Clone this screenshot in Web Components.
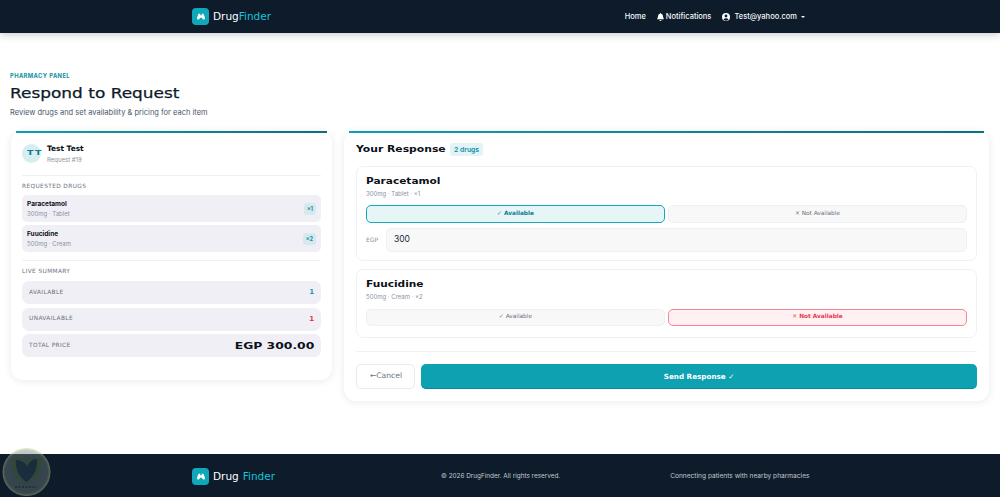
<!DOCTYPE html>
<html lang="en">
<head>
<meta charset="utf-8">
<title>DrugFinder</title>
<style>
    html, body { margin: 0; padding: 0; background: #fff; }
    body { font-family: Inter, "Liberation Sans", sans-serif; color: #0d1b2a; }
    drug-app { display: flex; flex-direction: column; height: 497px; overflow: hidden; position: relative; }
</style>
</head>
<body>
<drug-app>
    <app-nav></app-nav>
    <main-area>
        <page-header></page-header>
        <two-columns>
            <patient-panel></patient-panel>
            <response-panel>
                <drug-response name="Paracetamol" meta="300mg · Tablet · ×1" state="on" price="300"></drug-response>
                <drug-response name="Fuucidine" meta="500mg · Cream · ×2" state="off"></drug-response>
            </response-panel>
        </two-columns>
    </main-area>
    <app-footer></app-footer>
    <water-mark></water-mark>
</drug-app>

<script>
const WIDE = '"DejaVu Sans", sans-serif';

// the reference heading face is wider than anything installed, so stretch it
const stretch = (text, scale, width, origin = 'left') =>
    `<span style="display:inline-block;white-space:nowrap;width:${width}px;transform:scaleX(${scale});transform-origin:${origin}">${text}</span>`;

class BrandMark extends HTMLElement {
    constructor() {
        super();
        this.attachShadow({ mode: 'open' });
    }

    connectedCallback() {
        const gap = this.getAttribute('gap') || '0';
        this.shadowRoot.innerHTML = `
            <style>
                :host { display: inline-flex; align-items: center; gap: 4px; }
                .box {
                    width: 17px; height: 17px; border-radius: 4px; background: #0fa8bb;
                    display: flex; align-items: center; justify-content: center;
                }
                .name { display: flex; gap: ${gap}; color: #fff; font: 400 10.500px/1 ${WIDE}; white-space: nowrap; }
                .name b { font-weight: 400; color: #17c3d6; }
            </style>
            <span class="box">
                <svg width="8" height="7" viewBox="0 0 10 8" fill="#fff">
                    <path d="M2 .5h2v2h2v-2h2l2 5.200a1.700 1.700 0 0 1-3.200 1.100l-.5-1.300H3.700l-.5 1.300A1.700 1.700 0 0 1 0 5.700z"/>
                </svg>
            </span>
            <span class="name"><span>Drug</span><b>Finder</b></span>
        `;
    }
}
customElements.define('brand-mark', BrandMark);

class AppNav extends HTMLElement {
    constructor() {
        super();
        this.attachShadow({ mode: 'open' });
    }

    connectedCallback() {
        this.shadowRoot.innerHTML = `
            <style>
                :host {
                    display: flex; align-items: center; justify-content: space-between;
                    flex: none; height: 33px; padding: 0 195px 0 192px; background: #0d1b2a;
                    box-shadow: 0 2px 8px rgba(13, 27, 42, .22); position: relative;
                    font: 500 7.500px/1 Inter, sans-serif; color: #f4f6f8;
                }
                nav { display: flex; align-items: center; }
                span { display: flex; align-items: center; gap: 2px; }
                .home { margin-right: 11px; }
                .bell { margin-right: 11px; }
                .user { gap: 4px; }
                .caret { width: 0; height: 0; border: 2.500px solid transparent; border-top-color: #fff; border-bottom: 0; }
            </style>
            <brand-mark></brand-mark>
            <nav>
                <span class="home">Home</span>
                <span class="bell">
                    <svg width="7" height="8" viewBox="0 0 14 16" fill="#fff"><path d="M7 0a1 1 0 0 1 1 1v.7A5 5 0 0 1 12 6.600c0 3.400 2 4.600 2 6H0c0-1.400 2-2.600 2-6A5 5 0 0 1 6 1.700V1a1 1 0 0 1 1-1zM5 14h4a2 2 0 0 1-4 0z"/></svg>
                    Notifications
                </span>
                <span class="user">
                    <svg width="8" height="8" viewBox="0 0 16 16"><circle cx="8" cy="8" r="8" fill="#fff"/><circle cx="8" cy="6" r="2.800" fill="#0d1b2a"/><path d="M3 13a5.500 4 0 0 1 10 0 7 7 0 0 1-10 0z" fill="#0d1b2a"/></svg>
                    Test@yahoo.com
                    <i class="caret"></i>
                </span>
            </nav>
        `;
    }
}
customElements.define('app-nav', AppNav);

class MainArea extends HTMLElement {
    constructor() {
        super();
        this.attachShadow({ mode: 'open' });
    }

    connectedCallback() {
        this.shadowRoot.innerHTML = `
            <style>
                :host { display: block; flex: 1; padding: 39px 11px 0 10px; min-height: 0; }
            </style>
            <slot></slot>
        `;
    }
}
customElements.define('main-area', MainArea);

class PageHeader extends HTMLElement {
    constructor() {
        super();
        this.attachShadow({ mode: 'open' });
    }

    connectedCallback() {
        this.shadowRoot.innerHTML = `
            <style>
                :host { display: block; height: 59px; }
                .eyebrow { font: 700 5.800px/7px Inter, sans-serif; letter-spacing: .4px; color: #0e8fa3; }
                h1 { margin: 4px 0 0; font: 500 14px/20px ${WIDE}; color: #0d1b2a; -webkit-text-stroke: .25px #0d1b2a; }
                p { margin: 5px 0 0; font: 400 7.500px/10px Inter, sans-serif; color: #4a5565; }
            </style>
            <div class="eyebrow">PHARMACY PANEL</div>
            <h1>${stretch('Respond to Request', 1.21, 142)}</h1>
            <p>Review drugs and set availability &amp; pricing for each item</p>
        `;
    }
}
customElements.define('page-header', PageHeader);

class TwoColumns extends HTMLElement {
    constructor() {
        super();
        this.attachShadow({ mode: 'open' });
    }

    connectedCallback() {
        this.shadowRoot.innerHTML = `
            <style>
                :host { display: grid; grid-template-columns: 321px 645px; gap: 12px; align-items: start; margin-left: 1px; }
            </style>
            <slot></slot>
        `;
    }
}
customElements.define('two-columns', TwoColumns);

const CARD_CSS = `
    .card {
        position: relative; background: #fff; border-radius: 12px;
        box-shadow: 0 1px 8px rgba(13, 27, 42, .09);
    }
    .card::before {
        content: ""; position: absolute; left: 5px; right: 5px; top: 0; height: 2px;
        background: linear-gradient(90deg, #0e9fb0, #0d6f80);
    }
`;

class DrugRow extends HTMLElement {
    constructor() {
        super();
        this.attachShadow({ mode: 'open' });
    }

    connectedCallback() {
        this.shadowRoot.innerHTML = `
            <style>
                :host {
                    display: flex; align-items: center; justify-content: space-between;
                    height: 27px; padding: 0 5px; background: #f0eff5; border-radius: 5px;
                }
                b { display: block; font: 700 6.500px/9px Inter, sans-serif; color: #0a0f18; }
                small { display: block; margin-top: 1px; font: 400 6px/8px Inter, sans-serif; color: #8a93a0; }
                i { font: 700 5.500px/12px Inter, sans-serif; color: #0e8fa3; background: #d6e9ed; border-radius: 3px; padding: 0 3px; height: 12px; }
            </style>
            <div><b>${this.getAttribute('name')}</b><small>${this.getAttribute('meta')}</small></div>
            <i>${this.getAttribute('qty')}</i>
        `;
    }
}
customElements.define('drug-row', DrugRow);

class SummaryRow extends HTMLElement {
    constructor() {
        super();
        this.attachShadow({ mode: 'open' });
    }

    connectedCallback() {
        const color = this.getAttribute('color');
        const big = this.hasAttribute('big');
        const value = this.getAttribute('value');
        this.shadowRoot.innerHTML = `
            <style>
                :host {
                    display: flex; align-items: center; justify-content: space-between;
                    height: 23px; padding: 0 7px; background: #f0eff5; border-radius: 7px;
                }
                .label { font: 400 5.800px/1 ${WIDE}; letter-spacing: .4px; color: #6b7280; }
                b { font: 700 ${big ? '9.500px' : '7px'}/1 ${WIDE}; color: ${color}; }
            </style>
            <span class="label">${this.getAttribute('label')}</span>
            <b>${big ? stretch(value, 1.3, 61, 'right') : value}</b>
        `;
    }
}
customElements.define('summary-row', SummaryRow);

class PatientPanel extends HTMLElement {
    constructor() {
        super();
        this.attachShadow({ mode: 'open' });
    }

    connectedCallback() {
        this.shadowRoot.innerHTML = `
            <style>
                :host { display: block; }
                ${CARD_CSS}
                .card { height: 249px; box-sizing: border-box; padding: 13px 11px 0; }
                .who { display: flex; gap: 6px; height: 31px; border-bottom: 1px solid #eff0f3; }
                .avatar {
                    width: 19px; height: 19px; border-radius: 50%; background: #d6eef1; text-align: center;
                    font: 700 7px/19px ${WIDE}; color: #0e7c8c; letter-spacing: 1px;
                }
                .who b { display: block; font: 700 7.400px/10px ${WIDE}; color: #0a0f18; }
                .who small { display: block; margin-top: 2px; font: 400 6px/8px Inter, sans-serif; color: #8a93a0; }
                h4 { margin: 0; font: 400 5.800px/7px ${WIDE}; letter-spacing: .4px; color: #6b7280; }
                .req { margin-top: 7px; display: grid; gap: 3px; }
                .req h4 { margin-bottom: 2px; }
                .live { margin-top: 8px; border-top: 1px solid #eff0f3; padding-top: 7px; display: grid; gap: 3.500px; }
                .live h4 { margin-bottom: 2.500px; }
            </style>
            <div class="card">
                <div class="who">
                    <div class="avatar">${stretch('TT', 1.35, 10)}</div>
                    <div><b>Test Test</b><small>Request #19</small></div>
                </div>
                <div class="req">
                    <h4>REQUESTED DRUGS</h4>
                    <drug-row name="Paracetamol" meta="300mg · Tablet" qty="×1"></drug-row>
                    <drug-row name="Fuucidine" meta="500mg · Cream" qty="×2"></drug-row>
                </div>
                <div class="live">
                    <h4>LIVE SUMMARY</h4>
                    <summary-row label="AVAILABLE" value="1" color="#0e9fb0"></summary-row>
                    <summary-row label="UNAVAILABLE" value="1" color="#e8384f"></summary-row>
                    <summary-row label="TOTAL PRICE" value="EGP 300.00" color="#0a0f18" big></summary-row>
                </div>
            </div>
        `;
    }
}
customElements.define('patient-panel', PatientPanel);

class DrugResponse extends HTMLElement {
    constructor() {
        super();
        this.attachShadow({ mode: 'open' });
    }

    connectedCallback() {
        const state = this.getAttribute('state');
        const price = this.getAttribute('price');
        const name = this.getAttribute('name');
        this.shadowRoot.innerHTML = `
            <style>
                :host {
                    display: block; box-sizing: border-box; padding: 10px 9px 11px;
                    border: 1px solid #f0f1f3; border-radius: 7px; background: #fff;
                }
                h3 { margin: 0; font: 700 8px/10px ${WIDE}; color: #0a0f18; }
                small { display: block; margin-top: 3px; font: 400 6px/8px Inter, sans-serif; color: #8a93a0; }
                .pick { margin-top: 7.500px; display: grid; grid-template-columns: 1fr 1fr; gap: 3px; }
                button {
                    height: 17.500px; padding: 0; border: 1px solid #eef0f2; border-radius: 5px;
                    background: #f8f8f9; color: #6b7280; font: 400 5.800px/1 ${WIDE};
                }
                button.on { background: #e6f6f7; border-color: #12a9ba; color: #0e7c8c; font-weight: 700; }
                button.off { background: #fff1f2; border-color: #f58494; color: #e8384f; font-weight: 700; }
                .price { margin: 5.500px 0 -2.500px; display: flex; align-items: center; gap: 4px; }
                .price span { width: 16px; font: 400 6px/1 ${WIDE}; color: #8a93a0; }
                .price div {
                    flex: 1; height: 23.500px; box-sizing: border-box; padding-left: 7px; border: 1px solid #eef0f2;
                    border-radius: 5px; background: #f8f8f9; font: 400 8.500px/21px Inter, sans-serif; color: #1f2937;
                }
            </style>
            <h3>${stretch(name, 1.32, 56)}</h3>
            <small>${this.getAttribute('meta')}</small>
            <div class="pick">
                <button class="${state === 'on' ? 'on' : ''}">✓ Available</button>
                <button class="${state === 'off' ? 'off' : ''}">✕ Not Available</button>
            </div>
            ${price ? `<div class="price"><span>EGP</span><div>${price}</div></div>` : ''}
        `;
    }
}
customElements.define('drug-response', DrugResponse);

class ResponsePanel extends HTMLElement {
    constructor() {
        super();
        this.attachShadow({ mode: 'open' });
    }

    connectedCallback() {
        this.shadowRoot.innerHTML = `
            <style>
                :host { display: block; }
                ${CARD_CSS}
                .card { height: 270px; box-sizing: border-box; padding: 12px 12px 0; }
                .head { display: flex; align-items: center; gap: 4px; height: 13px; margin-bottom: 9.500px; }
                h2 { margin: 0; font: 700 8px/1 ${WIDE}; color: #0a0f18; }
                .chip { padding: 0 4px; height: 13px; border-radius: 3px; background: #e3f4f6; color: #0e8fa3; font: 600 6.800px/13px Inter, sans-serif; white-space: nowrap; }
                .list { display: grid; gap: 8px; }
                .foot { margin-top: 13px; padding-top: 11.500px; border-top: 1px solid #f0f1f3; display: flex; gap: 6px; }
                .cancel {
                    width: 59px; height: 25.500px; padding: 0 0 0 1px; border: 1px solid #e8eaed; border-radius: 5px;
                    background: #fff; color: #6b7280; font: 500 7.600px/1 ${WIDE};
                }
                .send {
                    flex: 1; height: 25.500px; padding: 1px 0 0; border: 0; border-bottom: 1px solid #0b8796; border-radius: 5px;
                    background: #0da1b2; color: #fff; font: 700 7.200px/1 ${WIDE};
                }
            </style>
            <div class="card">
                <div class="head"><h2>${stretch('Your Response', 1.35, 66)}</h2><span class="chip" style="margin-left:24px;">2 drugs</span></div>
                <div class="list"><slot></slot></div>
                <div class="foot">
                    <button class="cancel">←Cancel</button>
                    <button class="send">Send Response ✓</button>
                </div>
            </div>
        `;
    }
}
customElements.define('response-panel', ResponsePanel);

class AppFooter extends HTMLElement {
    constructor() {
        super();
        this.attachShadow({ mode: 'open' });
    }

    connectedCallback() {
        this.shadowRoot.innerHTML = `
            <style>
                :host {
                    display: flex; align-items: center; flex: none; height: 43px; box-sizing: border-box;
                    padding: 2px 0 0 192px; background: #0d1b2a; white-space: nowrap;
                    font: 400 6.400px/1 Inter, sans-serif; color: #c2c9d0;
                }
                .copy { margin-left: 166px; }
                .tag { margin-left: 110px; font-size: 6.600px; }
            </style>
            <brand-mark gap="4px"></brand-mark>
            <span class="copy">© 2026 DrugFinder. All rights reserved.</span>
            <span class="tag">Connecting patients with nearby pharmacies</span>
        `;
    }
}
customElements.define('app-footer', AppFooter);

class WaterMark extends HTMLElement {
    constructor() {
        super();
        this.attachShadow({ mode: 'open' });
    }

    connectedCallback() {
        this.shadowRoot.innerHTML = `
            <style>
                :host { position: absolute; left: 1px; top: 447px; width: 50px; height: 50px; pointer-events: none; }
            </style>
            <svg width="50" height="50" viewBox="0 0 50 50">
                <defs>
                    <radialGradient id="disc">
                        <stop offset="0" stop-color="#6d7880" stop-opacity=".4"/>
                        <stop offset=".88" stop-color="#727f80" stop-opacity=".42"/>
                        <stop offset="1" stop-color="#c9d68f" stop-opacity=".45"/>
                    </radialGradient>
                </defs>
                <circle cx="25.500" cy="25" r="24" fill="url(#disc)"/>
                <path d="M10 12c6-3 11-2 15.500 1C30 10 35 9 41 12c1 12-5 21-15.500 25C15 33 9 24 10 12z" fill="#30492f" fill-opacity=".65"/>
                <path d="M15 13c5 0 9 2 11 7 2-5 5-8 10-8 1 9-3 18-10.500 23C18 30 14 22 15 13z" fill="#142a3d" fill-opacity=".85"/>
                <path d="M14 40h22" stroke="#1c2b33" stroke-width="1.500" stroke-dasharray="2 1.500" fill="none"/>
            </svg>
        `;
    }
}
customElements.define('water-mark', WaterMark);
</script>
</body>
</html>
